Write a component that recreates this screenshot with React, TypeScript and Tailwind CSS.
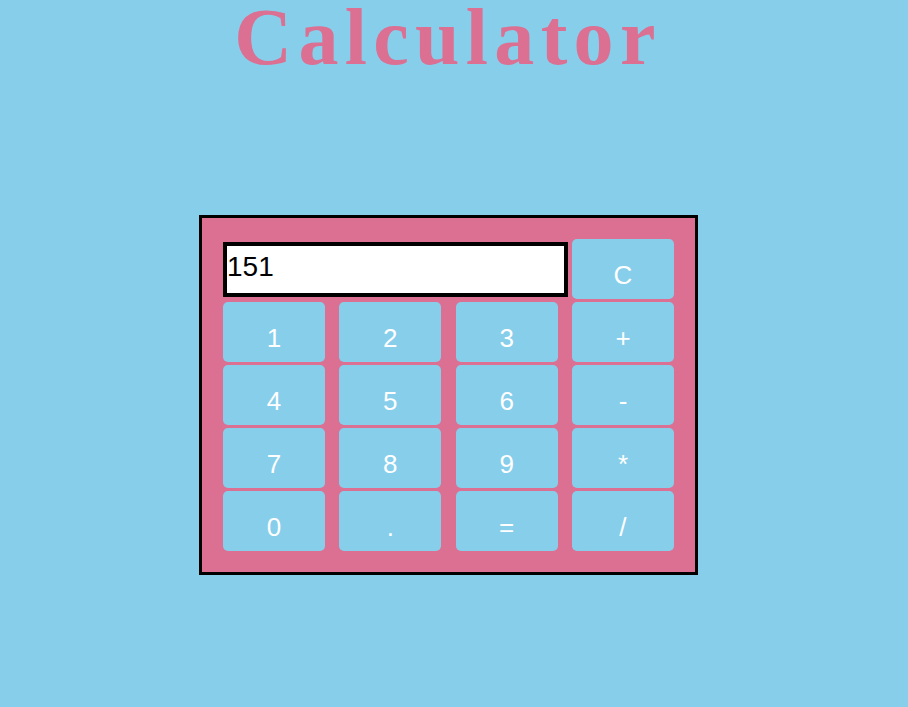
import React from "react";

const rows = [
  ["1", "2", "3", "+"],
  ["4", "5", "6", "-"],
  ["7", "8", "9", "*"],
  ["0", ".", "=", "/"],
];

function Key({ label }: { label: string }) {
  return (
    <button
      type="button"
      className="flex h-[60px] w-[102px] items-center justify-center rounded-[5px] bg-[#87CEEB] pt-[11px] text-[26px] leading-none text-white"
      style={{ fontFamily: '"Liberation Sans", Arial, sans-serif' }}
    >
      {label}
    </button>
  );
}

export default function App() {
  return (
    <div className="min-h-[707px] w-full overflow-hidden bg-[#87CEEB]">
      <h1
        className="pr-[12px] text-center text-[80px] font-bold leading-[74px] tracking-[6.3px] text-[#DB7093]"
        style={{ fontFamily: '"Liberation Serif", "Times New Roman", serif' }}
      >
        Calculator
      </h1>
      <div className="ml-[199px] mt-[141px] w-[499px] border-[3px] border-black bg-[#DB7093] p-[21px]">
        <div className="flex flex-col gap-[3px]">
          <div className="flex items-center">
            <input
              readOnly
              value="151"
              className="h-[55px] w-[345px] border-4 border-black bg-white p-0 pb-[4px] text-[28px] text-black outline-none"
              style={{ fontFamily: '"Liberation Sans", Arial, sans-serif' }}
            />
            <div className="ml-[4px]">
              <Key label="C" />
            </div>
          </div>
          {rows.map((r, i) => (
            <div key={i} className="grid grid-cols-[102px_102px_102px_102px] gap-x-[14.33px]">
              {r.map((k) => (
                <Key key={k} label={k} />
              ))}
            </div>
          ))}
        </div>
      </div>
    </div>
  );
}
